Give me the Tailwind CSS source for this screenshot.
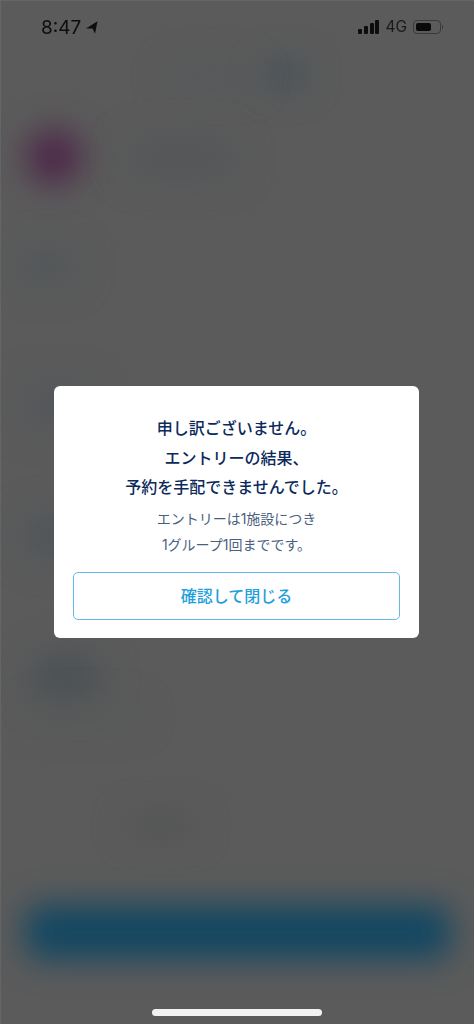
<!DOCTYPE html>
<html lang="ja">
<head>
    <meta charset="UTF-8">
    <meta name="viewport" content="width=device-width, initial-scale=1.0">
    <title>エントリー結果</title>
    <script src="https://cdn.jsdelivr.net/npm/@tailwindcss/browser@4"></script>
</head>
<body class="bg-[#5b5b5b] font-['Inter','Noto_Sans_CJK_JP',sans-serif]">
    <div class="relative w-full h-[1024px] overflow-hidden flex flex-col">

        <!-- Blurred page behind the dialog -->
        <div class="absolute inset-0 border-l border-t border-[#666666]">
            <div class="absolute left-[27px] top-[130px] w-[52px] h-[52px] rounded-full bg-[#4b1f46] blur-[17px]"></div>
            <div class="absolute left-[262px] top-[60px] w-[44px] h-[28px] rounded-full bg-[#475259] blur-[16px]"></div>
            <div class="absolute left-[165px] top-[65px] w-[90px] h-[22px] rounded-full bg-[#55585a] blur-[16px]"></div>
            <div class="absolute left-[125px] top-[140px] w-[110px] h-[34px] rounded-full bg-[#525557] blur-[18px]"></div>
            <div class="absolute left-[15px] top-[250px] w-[60px] h-[30px] rounded-full bg-[#505659] blur-[18px]"></div>
            <div class="absolute left-[20px] top-[385px] w-[70px] h-[40px] rounded-full bg-[#52565a] blur-[18px]"></div>
            <div class="absolute left-[20px] top-[515px] w-[70px] h-[40px] rounded-full bg-[#4f555a] blur-[18px]"></div>
            <div class="absolute left-[30px] top-[655px] w-[70px] h-[45px] rounded-full bg-[#495054] blur-[18px]"></div>
            <div class="absolute left-[30px] top-[705px] w-[110px] h-[18px] rounded-full bg-[#575959] blur-[16px]"></div>
            <div class="absolute left-[125px] top-[812px] w-[70px] h-[26px] rounded-full bg-[#535454] blur-[16px]"></div>
            <div class="absolute left-[24px] top-[904px] w-[426px] h-[54px] rounded-[16px] bg-[#124762] blur-[16px]"></div>
        </div>

        <!-- Status bar -->
        <div class="relative h-[54px] pl-[41px] pr-[31px] flex items-center justify-between text-[#0d0d0d] blur-[0.3px]">
            <div class="flex items-center gap-[5px]">
                <span class="text-[19px] leading-none font-['Inter',sans-serif]">8:47</span>
                <svg class="w-[12px] h-[13px]" viewBox="0 0 12 13" fill="currentColor"><path d="M0 7.6 11.5 0.3 9 12.8 6.6 7.6Z"/></svg>
            </div>
            <div class="flex items-center">
                <div class="flex items-end gap-[1.67px] h-[14px]">
                    <span class="w-[4px] h-[5px] rounded-[1px] bg-[#0d0d0d]"></span>
                    <span class="w-[4px] h-[8px] rounded-[1px] bg-[#0d0d0d]"></span>
                    <span class="w-[4px] h-[11px] rounded-[1px] bg-[#0d0d0d]"></span>
                    <span class="w-[4px] h-[14px] rounded-[1px] bg-[#0d0d0d]"></span>
                </div>
                <span class="ml-[6px] text-[15.5px] leading-none font-['Inter',sans-serif] text-[#1a1a1a]">4G</span>
                <div class="ml-[6px] flex items-center">
                    <div class="w-[28px] h-[14px] rounded-[4px] border border-[#3a3a3a] p-[2px]">
                        <div class="w-[15px] h-full rounded-[2px] bg-[#0a0a0a]"></div>
                    </div>
                    <span class="ml-[1px] w-[1px] h-[4px] bg-[#3a3a3a]"></span>
                </div>
            </div>
        </div>

        <!-- Dialog -->
        <div class="flex-1 flex items-center justify-center">
            <div class="relative -mt-[54px] -ml-[1px] w-[365px] h-[252px] bg-white rounded-[6px] px-[19px] pt-[28px] text-center">
                <div class="text-[16px] leading-[29.5px] font-medium text-[#0b2a5b]">
                    <p>申し訳ございません。</p>
                    <p>エントリーの結果、</p>
                    <p>予約を手配できませんでした。</p>
                </div>
                <div class="mt-[3px] text-[14px] leading-[26.5px] text-[#4a5f80]">
                    <p>エントリーは1施設につき</p>
                    <p>1グループ1回までです。</p>
                </div>
                <button class="mt-[13px] w-[327px] h-[48px] rounded-[5px] border border-[#64b9ea] text-[16px] font-medium text-[#1f9fdc]">確認して閉じる</button>
            </div>
        </div>

        <!-- Home indicator -->
        <div class="absolute left-[152px] top-[1009px] w-[170px] h-[7px] rounded-full bg-[#f2f2f2]"></div>
    </div>
</body>
</html>
